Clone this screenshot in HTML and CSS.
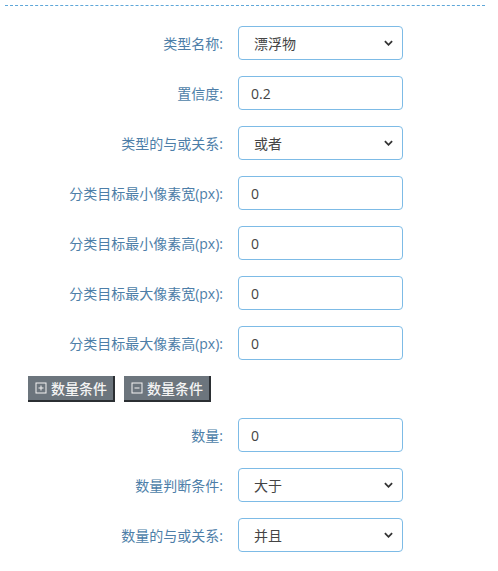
FILE: index.html
```html
<!DOCTYPE html>
<html lang="zh-CN">
<head>
    <meta charset="UTF-8">
    <meta name="viewport" content="width=device-width, initial-scale=1.0">
    <title>类型条件</title>
    <link rel="stylesheet" href="styles.css">
</head>
<body>

    <div class="divider"></div>

    <form class="cond-form">
        <div class="form-row">
            <label>类型名称:</label>
            <div class="select-wrap">
                <select class="field">
                    <option>漂浮物</option>
                </select>
                <svg class="chevron" viewBox="0 0 10 6"><path d="M1 1l4 4 4-4" /></svg>
            </div>
        </div>
        <div class="form-row">
            <label>置信度:</label>
            <input class="field" type="text" value="0.2">
        </div>
        <div class="form-row">
            <label>类型的与或关系:</label>
            <div class="select-wrap">
                <select class="field">
                    <option>或者</option>
                </select>
                <svg class="chevron" viewBox="0 0 10 6"><path d="M1 1l4 4 4-4" /></svg>
            </div>
        </div>
        <div class="form-row">
            <label>分类目标最小像素宽(px):</label>
            <input class="field" type="text" value="0">
        </div>
        <div class="form-row">
            <label>分类目标最小像素高(px):</label>
            <input class="field" type="text" value="0">
        </div>
        <div class="form-row">
            <label>分类目标最大像素宽(px):</label>
            <input class="field" type="text" value="0">
        </div>
        <div class="form-row">
            <label>分类目标最大像素高(px):</label>
            <input class="field" type="text" value="0">
        </div>

        <div class="btn-row">
            <button type="button" class="btn-gray">
                <svg class="btn-icon" viewBox="0 0 12 12"><rect x="1" y="1" width="10" height="10" /><path d="M3.5 6h5M6 3.5v5" /></svg>数量条件
            </button>
            <button type="button" class="btn-gray">
                <svg class="btn-icon" viewBox="0 0 12 12"><rect x="1" y="1" width="10" height="10" /><path d="M3.5 6h5" /></svg>数量条件
            </button>
        </div>

        <div class="form-row">
            <label>数量:</label>
            <input class="field" type="text" value="0">
        </div>
        <div class="form-row">
            <label>数量判断条件:</label>
            <div class="select-wrap">
                <select class="field">
                    <option>大于</option>
                </select>
                <svg class="chevron" viewBox="0 0 10 6"><path d="M1 1l4 4 4-4" /></svg>
            </div>
        </div>
        <div class="form-row">
            <label>数量的与或关系:</label>
            <div class="select-wrap">
                <select class="field">
                    <option>并且</option>
                </select>
                <svg class="chevron" viewBox="0 0 10 6"><path d="M1 1l4 4 4-4" /></svg>
            </div>
        </div>
    </form>

</body>
</html>
```

FILE: styles.css
```css
body {
    margin: 0;
    background: #fff;
    font-family: "Open Sans", "Noto Sans CJK SC", sans-serif;
}
.divider {
    width: 480px;
    margin: 5px 0 0 5px;
    border-top: 1px dashed #5ea7d9;
}
.cond-form {
    padding-top: 20px;
}
.form-row {
    display: flex;
    align-items: center;
    gap: 15px;
    margin-bottom: 16px;
}
.form-row label {
    width: 223px;
    text-align: right;
    font-size: 14px;
    color: #4d7ea8;
}
.field {
    box-sizing: border-box;
    width: 165px;
    height: 34px;
    padding: 0 12px;
    border: 1px solid #7dbbe6;
    border-radius: 4px;
    background: #fff;
    font-family: "Open Sans", "Noto Sans CJK SC", sans-serif;
    font-size: 14px;
    color: #444;
    outline: none;
}
select.field {
    appearance: none;
    -webkit-appearance: none;
    padding-left: 15px;
}
.select-wrap {
    position: relative;
    width: 165px;
    height: 34px;
}
.chevron {
    position: absolute;
    right: 10px;
    top: 14px;
    width: 9px;
    height: 6px;
    fill: none;
    stroke: #333;
    stroke-width: 2;
    pointer-events: none;
}
.btn-row {
    display: flex;
    gap: 9px;
    padding-left: 28px;
    margin-bottom: 16px;
}
.btn-gray {
    display: flex;
    align-items: center;
    gap: 4px;
    height: 26px;
    padding: 0 6px 0 7px;
    border: none;
    border-right: 2px solid #2b2f33;
    border-bottom: 2px solid #2b2f33;
    background-color: #6c757d;
    color: #f4f4f4;
    font-family: "Noto Sans CJK SC", sans-serif;
    font-size: 14px;
    font-weight: 500;
    cursor: pointer;
}
.btn-icon {
    width: 12px;
    height: 12px;
    fill: none;
    stroke: #f4f4f4;
    stroke-width: 1;
}
```
